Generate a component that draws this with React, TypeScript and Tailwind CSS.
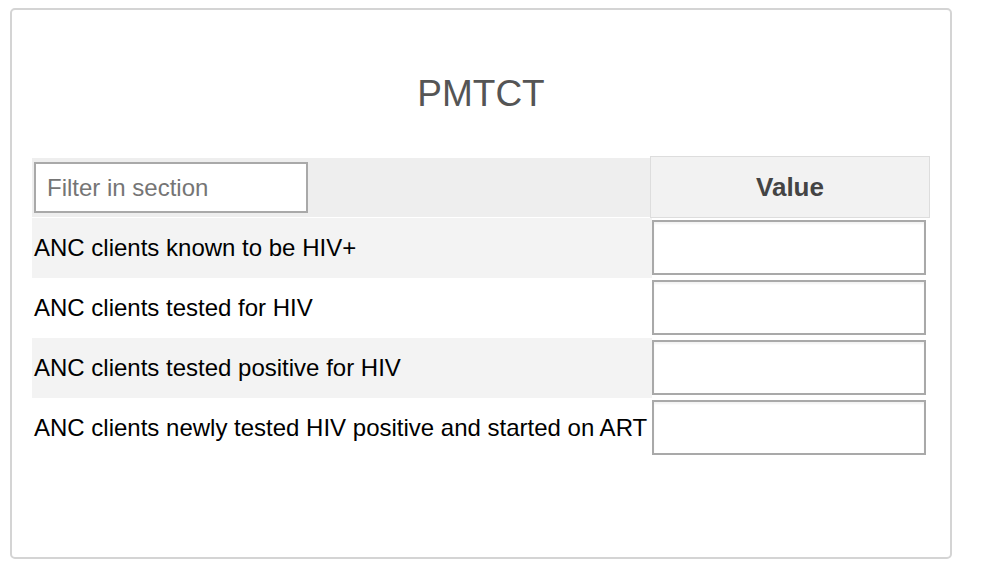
import React from "react";

const rows = [
  "ANC clients known to be HIV+",
  "ANC clients tested for HIV",
  "ANC clients tested positive for HIV",
  "ANC clients newly tested HIV positive and started on ART",
];

export default function App() {
  return (
    <div className="w-[984px] h-[584px] bg-white pl-[10px] pt-[8px]" style={{ fontFamily: '"Liberation Sans", Arial, sans-serif' }}>
      <div className="w-[942px] h-[551px] border-2 border-[#d4d4d4] rounded-[5px] flex flex-col">
        <div className="h-[146px] flex items-center justify-center pt-[20px]">
          <h1 className="text-[37px] leading-none text-[#555555]">PMTCT</h1>
        </div>
        <div className="ml-[20px] w-[898px] flex flex-col">
          <div className="flex h-[62px]">
            <div className="w-[618px] mt-[2px] h-[59px] bg-[#eeeeee] flex items-center pl-[2px]">
              <input
                placeholder="Filter in section"
                className="w-[274px] h-[51px] border-2 border-[#a9a9a9] bg-white px-[11px] text-[24px] text-black placeholder:text-[#757575] outline-none"
              />
            </div>
            <div className="w-[280px] h-[62px] border border-[#dddddd] bg-[#f2f2f2] flex items-center justify-center">
              <span className="text-[26px] font-bold text-[#444444]">Value</span>
            </div>
          </div>
          {rows.map((r, i) => (
            <div key={r} className={`flex h-[60px] ${i % 2 === 0 ? "bg-[#f3f3f3]" : "bg-white"}`}>
              <div className="w-[620px] flex items-center pl-[2px] text-[24px] text-black whitespace-nowrap">{r}</div>
              <div className="w-[278px] flex items-start pt-[2px] bg-white">
                <input className="w-[274px] h-[55px] border-2 border-[#a9a9a9] bg-white outline-none shadow-[inset_0_2px_2px_rgba(0,0,0,0.05)]" />
              </div>
            </div>
          ))}
        </div>
      </div>
    </div>
  );
}
